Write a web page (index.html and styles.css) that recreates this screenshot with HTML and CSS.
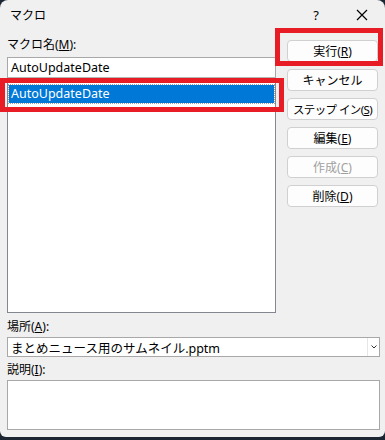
FILE: index.html
```html
<!DOCTYPE html>
<html lang="ja">
<head>
<meta charset="utf-8">
<link rel="stylesheet" href="styles.css">
</head>
<body>
<div class="dialog">
  <div class="titlebar">
    <div class="title">マクロ</div>
    <div class="tb-btn">?</div>
    <div class="tb-btn">
      <svg width="12" height="12" viewBox="0 0 12 12"><path d="M1 1L11 11M11 1L1 11" stroke="#000" stroke-width="1.2" fill="none"/></svg>
    </div>
  </div>
  <div class="content">
    <div class="left">
      <div class="label">マクロ名(<u>M</u>):</div>
      <div class="textbox">AutoUpdateDate</div>
      <div class="listbox">
        <div class="item selected">AutoUpdateDate</div>
      </div>
    </div>
    <div class="right">
      <div class="btn">実行(<u>R</u>)</div>
      <div class="btn">キャンセル</div>
      <div class="btn tight">ステップ イン(<u>S</u>)</div>
      <div class="btn">編集(<u>E</u>)</div>
      <div class="btn disabled">作成(<u>C</u>)</div>
      <div class="btn">削除(<u>D</u>)</div>
    </div>
  </div>
  <div class="bottom">
    <div class="label">場所(<u>A</u>):</div>
    <div class="combo">
      <span class="combo-text">まとめニュース用のサムネイル.pptm</span>
      <span class="combo-arrow"><svg width="6" height="4" viewBox="0 0 6 4"><path d="M0.5 0.5L3 3L5.5 0.5" stroke="#333" stroke-width="1" fill="none"/></svg></span>
    </div>
    <div class="label">説明(<u>I</u>):</div>
    <div class="desc"></div>
  </div>
  <div class="mark mark-list"></div>
  <div class="mark mark-run"></div>
</div>
</body>
</html>
```
FILE: styles.css
```css
* { box-sizing: border-box; }
html, body { margin: 0; padding: 0; }
body {
  width: 385px;
  height: 440px;
  background: #1c2633;
  font-family: "Noto Sans", "Noto Sans CJK JP", sans-serif;
  font-size: 12px;
  color: #000;
  overflow: hidden;
}
.dialog {
  position: relative;
  width: 385px;
  height: 437px;
  background: #f0f0f0;
  border-radius: 8px 8px 6px 6px;
  display: flex;
  flex-direction: column;
}
.titlebar {
  height: 30px;
  display: flex;
  align-items: center;
  padding-left: 10px;
}
.title { flex: 1; font-size: 12px; }
.tb-btn {
  width: 46px;
  height: 30px;
  display: flex;
  align-items: center;
  justify-content: center;
  font-size: 13px;
}
.content {
  display: grid;
  grid-template-columns: 269px 91px;
  column-gap: 11px;
  padding: 7px 0 0 7px;
}
.left { display: flex; flex-direction: column; }
.label {
  height: 16px;
  line-height: 16px;
  margin-bottom: 4px;
  white-space: nowrap;
}
.textbox {
  height: 21px;
  background: #fff;
  border: 1px solid #a8a8a8;
  border-bottom-color: #b4b4b4;
  padding-left: 3px;
  line-height: 19px;
  font-size: 12.5px;
}
.listbox {
  height: 235px;
  background: #fff;
  border: 1px solid #828790;
  padding: 6px 1px;
}
.item {
  height: 18px;
  line-height: 18px;
  padding-left: 2px;
  font-size: 12.5px;
}
.selected {
  background: #0078d7;
  color: #fff;
  outline: 1px dotted #a0a0a0;
}
.right {
  display: flex;
  flex-direction: column;
  gap: 7px;
  padding-top: 3px;
}
.btn {
  height: 22px;
  background: #fdfdfd;
  border: 1px solid #d0d0d0;
  border-radius: 4px;
  display: flex;
  align-items: center;
  justify-content: center;
  white-space: nowrap;
}
.btn.tight { letter-spacing: -0.6px; font-size: 11.5px; }
.btn.disabled { color: #a0a0a0; }
.bottom {
  padding: 6px 5px 0 7px;
  display: flex;
  flex-direction: column;
}
.bottom .label { margin-bottom: 2px; }
.combo {
  height: 20px;
  background: #fff;
  border: 1px solid #a8a8a8;
  display: flex;
  align-items: center;
  margin-bottom: 5px;
}
.combo-text { flex: 1; padding-left: 3px; font-size: 12.5px; }
.combo-arrow {
  width: 12px;
  height: 18px;
  display: flex;
  align-items: center;
  justify-content: center;
  border-left: 1px solid #e6e6e6;
}
.desc {
  height: 50px;
  background: #fff;
  border: 1px solid #a8a8a8;
}
.mark {
  position: absolute;
  border: 5px solid #e81c24;
}
.mark-list { left: 0; top: 78px; width: 284px; height: 34px; }
.mark-run { left: 275px; top: 28px; width: 108px; height: 38px; }
```
